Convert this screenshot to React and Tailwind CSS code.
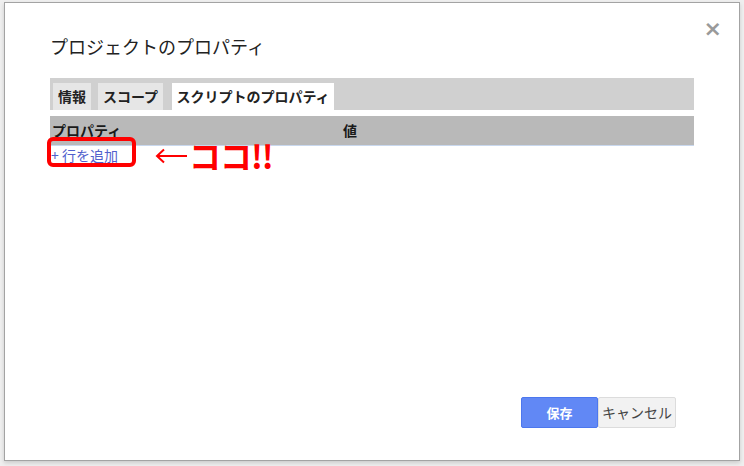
import React from "react";

export default function App() {
  const jp = { fontFamily: '"Noto Sans CJK JP", "Noto Sans", sans-serif' };
  return (
    <div className="w-[744px] h-[466px] bg-[#efefef] pt-[2px] pl-[4px] overflow-hidden" style={jp}>
      <div className="relative w-[736px] h-[459px] bg-white border border-[#a3a3a3] shadow-[0_2px_4px_rgba(0,0,0,0.15)] flex flex-col px-[45px]">
        <div className="absolute top-[15px] right-[17px] text-[22px] leading-[22px] text-[#9a9a9a] font-bold" style={{ fontFamily: '"DejaVu Sans", sans-serif' }}>
          ×
        </div>
        <div className="mt-[30px] text-[18px] leading-[26px] text-[#222]">プロジェクトのプロパティ</div>
        <div className="mt-[19px] h-[32px] bg-[#d0d0d0] flex items-end pl-[3px]">
          <div className="h-[27px] w-[38px] bg-[#e6e6e6] flex items-center justify-center text-[14px] font-bold text-[#222]">情報</div>
          <div className="ml-[7px] h-[27px] w-[65px] bg-[#e6e6e6] flex items-center justify-center text-[14px] font-bold text-[#222]">スコープ</div>
          <div className="ml-[9px] h-[27px] w-[162px] bg-white flex items-center justify-center text-[14px] font-bold text-[#222]">スクリプトのプロパティ</div>
        </div>
        <div className="mt-[6px] h-[30px] bg-[#b9b9b9] border-b border-[#c9d8ee] flex items-center text-[14px] font-bold text-[#1a1a1a]">
          <div className="w-[293px] pl-[2px]">プロパティ</div>
          <div>値</div>
        </div>
        <div className="relative h-[20px]">
          <div className="pl-[1px] text-[14px] leading-[18px] text-[#5160cc]">+ 行を追加</div>
          <div className="absolute left-[-3px] top-[-9px] w-[89px] h-[30px] border-[4px] border-[#ff0000] rounded-[6px]"></div>
          <div className="absolute left-[104px] top-[-8px] flex items-center text-[#ff0000]">
            <svg width="34" height="18" viewBox="0 0 34 18" className="mt-[2px]">
              <path d="M33 9 H3 M10 2.5 L3 9 L10 15.5" stroke="#ff0000" strokeWidth="2" fill="none" />
            </svg>
            <span className="text-[32px] leading-[34px] font-bold ml-[1px] tracking-[-1px]">ココ!!</span>
          </div>
        </div>
        <div className="flex-1"></div>
        <div className="flex justify-end pr-[18px] mb-[32px]">
          <div className="w-[77px] h-[31px] bg-[#6188f5] border border-[#4c77ee] rounded-[2px] flex items-center justify-center text-[13px] font-bold text-white">保存</div>
          <div className="w-[78px] h-[31px] bg-[#f2f2f2] border border-[#dcdcdc] rounded-[2px] flex items-center justify-center text-[14px] text-[#444]">キャンセル</div>
        </div>
      </div>
    </div>
  );
}
